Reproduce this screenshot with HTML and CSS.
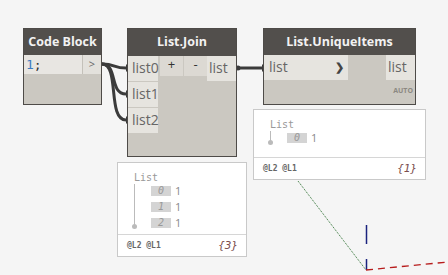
FILE: index.html
```html
<!DOCTYPE html>
<html lang="en">
    <head>
        <meta charset="utf-8">
        <title>Dynamo Graph</title>
        <link rel="stylesheet" href="styles.css">
    </head>
    <body>
        <div class="canvas">
            <svg class="wires" width="448" height="275" viewBox="0 0 448 275">
                <!-- code block to list.join -->
                <path d="M102,64 C116,64 113,68 126,68" class="wire"/>
                <path d="M102,64 C118,64 109,94 126,94" class="wire"/>
                <path d="M102,64 C120,64 107,120 126,120" class="wire"/>
                <!-- list.join to unique items -->
                <path d="M237,68 L262,68" class="wire"/>
                <circle cx="238" cy="68" r="2.5" class="dot"/>
                <path d="M126,64 L130,68 L126,72 Z" class="dot"/>
                <path d="M126,90 L130,94 L126,98 Z" class="dot"/>
                <path d="M126,116 L130,120 L126,124 Z" class="dot"/>
                <path d="M262,64 L266,68 L262,72 Z" class="dot"/>
                <!-- background axes -->
                <line x1="298" y1="181" x2="366" y2="270" class="axisGreen"/>
                <line x1="366.5" y1="225" x2="366.5" y2="244" class="axisBlue"/>
                <line x1="366.5" y1="259" x2="366.5" y2="270" class="axisBlue"/>
                <line x1="366" y1="270" x2="448" y2="262" class="axisRed"/>
            </svg>

            <div class="node codeBlock">
                <div class="nodeTitle">Code Block</div>
                <div class="codeRow">
                    <div class="codeText"><span class="num">1</span>;</div>
                    <div class="outPort">&gt;</div>
                </div>
            </div>

            <div class="node listJoin">
                <div class="nodeTitle">List.Join</div>
                <div class="joinBody">
                    <div class="inputs">
                        <div class="portLabel">list0</div>
                        <div class="portLabel">list1</div>
                        <div class="portLabel">list2</div>
                    </div>
                    <div class="buttons">
                        <div class="smallButton">+</div>
                        <div class="smallButton">-</div>
                    </div>
                    <div class="outputs">
                        <div class="portLabel outLabel">list</div>
                    </div>
                </div>
            </div>

            <div class="node uniqueItems">
                <div class="nodeTitle">List.UniqueItems</div>
                <div class="uniqueRow">
                    <div class="portLabel inWide">list<span class="chevron">&#x276F;</span></div>
                    <div class="portLabel outLabel">list</div>
                </div>
                <div class="lacing">AUTO</div>
            </div>

            <div class="preview joinPreview">
                <div class="previewBody">
                    <div class="treeLine"></div>
                    <div class="listName">List</div>
                    <div class="items">
                        <div class="item"><span class="index">0</span><span class="value">1</span></div>
                        <div class="item"><span class="index">1</span><span class="value">1</span></div>
                        <div class="item"><span class="index">2</span><span class="value">1</span></div>
                    </div>
                </div>
                <div class="previewFooter">
                    <span class="levels">@L2 @L1</span>
                    <span class="count">{3}</span>
                </div>
            </div>

            <div class="preview uniquePreview">
                <div class="previewBody">
                    <div class="treeLine shortLine"></div>
                    <div class="listName">List</div>
                    <div class="items">
                        <div class="item"><span class="index">0</span><span class="value">1</span></div>
                    </div>
                </div>
                <div class="previewFooter">
                    <span class="levels">@L2 @L1</span>
                    <span class="count">{1}</span>
                </div>
            </div>
        </div>
    </body>
</html>
```

FILE: styles.css
```css
* {
    margin: 0;
    padding: 0;
    box-sizing: border-box;
}
body {
    background: #f5f5f5;
    font-family: 'Open Sans', sans-serif;
}
.canvas {
    position: relative;
    width: 448px;
    height: 275px;
    overflow: hidden;
    background: #f5f5f5;
}
.wires {
    position: absolute;
    left: 0;
    top: 0;
}
.wire {
    fill: none;
    stroke: #3b3b3b;
    stroke-width: 3;
}
.dot {
    fill: #3b3b3b;
}
.axisGreen {
    stroke: #2a6e2e;
    stroke-width: 1;
    stroke-dasharray: 1 1;
}
.axisBlue {
    stroke: #1a237e;
    stroke-width: 1.5;
}
.axisRed {
    stroke: #b71c1c;
    stroke-width: 1.3;
    stroke-dasharray: 7 5;
}

/* nodes */
.node {
    position: absolute;
    background: #cbc8c1;
    border: 1px solid #4e4b48;
    display: flex;
    flex-direction: column;
}
.nodeTitle {
    background: #524f4c;
    color: #f2f2f2;
    font-weight: bold;
    font-size: 12.5px;
    text-align: center;
    height: 26px;
    line-height: 25px;
}
.codeBlock {
    left: 23px;
    top: 28px;
    width: 79px;
    height: 77px;
}
.codeRow {
    display: flex;
    height: 19px;
}
.codeText {
    flex: 1;
    background: #e8e6e2;
    font-family: 'DejaVu Sans Mono', monospace;
    font-size: 13px;
    line-height: 19px;
    padding-left: 2px;
    color: #333;
}
.num {
    color: #3d7cc0;
}
.outPort {
    width: 19px;
    background: #e3e1dc;
    border-left: 1px solid #c4c1ba;
    color: #666;
    font-size: 11px;
    text-align: center;
    line-height: 18px;
}
.listJoin {
    left: 127px;
    top: 28px;
    width: 110px;
    height: 129px;
}
.listJoin .nodeTitle {
    height: 27px;
    line-height: 26px;
}
.joinBody {
    display: flex;
}
.inputs {
    display: flex;
    flex-direction: column;
    gap: 1px;
}
.portLabel {
    background: #e6e4df;
    color: #666;
    font-size: 14px;
    height: 25px;
    line-height: 24px;
    padding: 0 4px;
}
.inputs .portLabel {
    width: 30px;
}
.buttons {
    display: flex;
    gap: 1px;
    margin-left: 2px;
}
.smallButton {
    width: 23px;
    height: 20px;
    background: #dcd9d3;
    color: #333;
    font-size: 13px;
    text-align: center;
    line-height: 17px;
}
.outputs {
    margin-left: auto;
}
.outLabel {
    width: 29px;
    padding: 0 0 0 2px;
}
.uniqueItems {
    left: 263px;
    top: 28px;
    width: 153px;
    height: 77px;
}
.uniqueRow {
    display: flex;
    justify-content: space-between;
}
.inWide {
    width: 84px;
    display: flex;
    justify-content: space-between;
    padding: 0 4px 0 5px;
}
.chevron {
    font-size: 11px;
    color: #444;
    font-weight: bold;
}
.lacing {
    text-align: right;
    font-size: 7px;
    font-weight: bold;
    color: #8c8882;
    padding: 6px 2px 0 0;
}

/* previews */
.preview {
    position: absolute;
    background: #ffffff;
    border: 1px solid #c9c9c9;
    display: flex;
    flex-direction: column;
}
.joinPreview {
    left: 117px;
    top: 162px;
    width: 130px;
    height: 95px;
}
.uniquePreview {
    left: 253px;
    top: 109px;
    width: 173px;
    height: 71px;
}
.previewBody {
    flex: 1;
    position: relative;
    padding: 8px 0 0 16px;
    font-family: 'DejaVu Sans Mono', monospace;
    font-size: 10px;
    color: #999;
}
.treeLine {
    position: absolute;
    left: 16px;
    top: 21px;
    width: 1px;
    height: 42px;
    background: #bbb;
}
.treeLine::after {
    content: '';
    position: absolute;
    left: -2px;
    bottom: -3px;
    width: 5px;
    height: 5px;
    border-radius: 50%;
    background: #bbb;
}
.shortLine {
    height: 11px;
}
.listName {
    height: 13px;
    line-height: 13px;
}
.items {
    display: flex;
    flex-direction: column;
    gap: 6px;
    margin: 2px 0 0 17px;
}
.item {
    display: flex;
    align-items: center;
    height: 10px;
}
.index {
    background: #d4d4d4;
    color: #999;
    font-style: italic;
    width: 20px;
    height: 10px;
    line-height: 10px;
    text-align: center;
}
.value {
    margin-left: 4px;
    font-family: 'Open Sans', sans-serif;
    font-size: 11px;
    line-height: 10px;
    color: #888;
}
.previewFooter {
    height: 22px;
    border-top: 1px solid #d6d6d6;
    display: flex;
    justify-content: space-between;
    align-items: center;
    padding: 0 8px 0 9px;
}
.levels {
    font-family: 'DejaVu Sans Mono', monospace;
    font-size: 8px;
    font-weight: bold;
    color: #666;
}
.count {
    font-family: 'DejaVu Sans Mono', monospace;
    font-size: 11px;
    font-style: italic;
    color: #7a4d4d;
}
```
